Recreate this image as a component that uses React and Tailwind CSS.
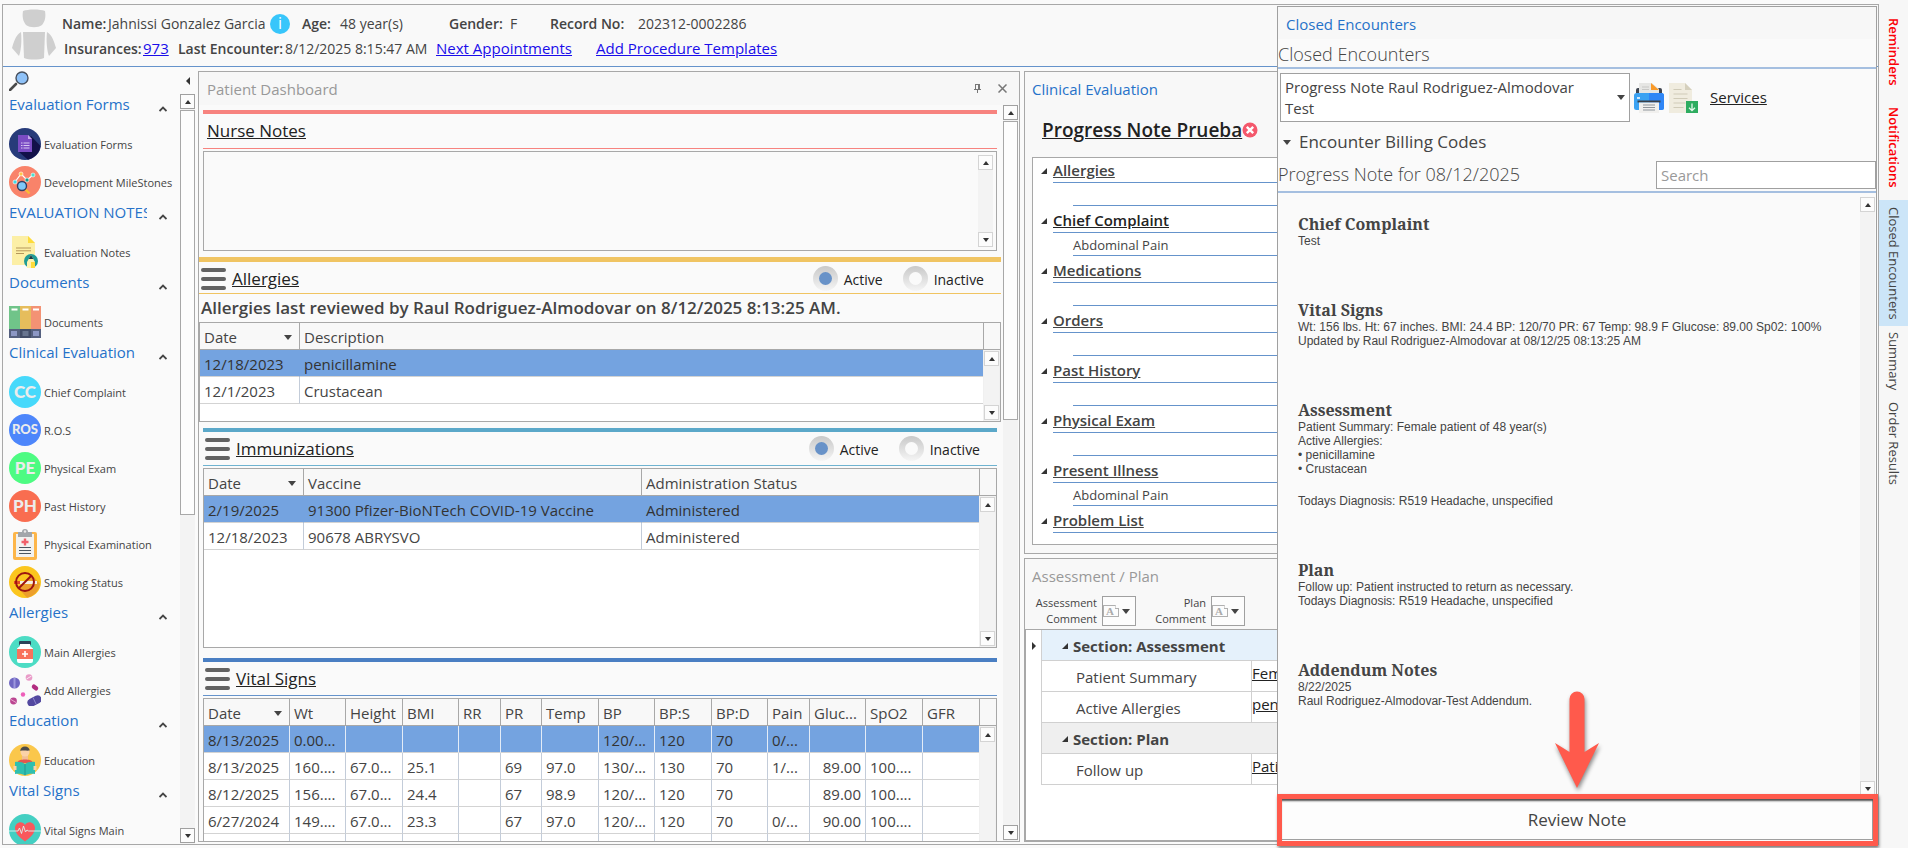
import React, { useState } from "react";

const navSections = [
  {
    title: "Evaluation Forms",
    items: [
      { label: "Evaluation Forms", icon: "form" },
      { label: "Development MileStones", icon: "milestones" },
    ],
  },
  { title: "EVALUATION NOTES", items: [{ label: "Evaluation Notes", icon: "note" }] },
  { title: "Documents", items: [{ label: "Documents", icon: "binders" }] },
  {
    title: "Clinical Evaluation",
    items: [
      { label: "Chief Complaint", badge: "CC", color: "bg-[#46d9fb]" },
      { label: "R.O.S", badge: "ROS", color: "bg-[#4d86fb]" },
      { label: "Physical Exam", badge: "PE", color: "bg-[#4dfb82]" },
      { label: "Past History", badge: "PH", color: "bg-[#f96d50]" },
      { label: "Physical Examination", icon: "clipboard" },
      { label: "Smoking Status", icon: "smoking" },
    ],
  },
  {
    title: "Allergies",
    items: [
      { label: "Main Allergies", icon: "bottle" },
      { label: "Add Allergies", icon: "pills" },
    ],
  },
  { title: "Education", items: [{ label: "Education", icon: "reader" }] },
  { title: "Vital Signs", items: [{ label: "Vital Signs Main", icon: "heart" }] },
];

const allergies = {
  columns: [{ label: "Date", width: "w-[100px]", sorted: true }, { label: "Description" }],
  rows: [
    ["12/18/2023", "penicillamine"],
    ["12/1/2023", "Crustacean"],
  ],
};

const immunizations = {
  columns: [
    { label: "Date", width: "w-[100px]", sorted: true },
    { label: "Vaccine", width: "w-[338px]" },
    { label: "Administration Status" },
  ],
  rows: [
    ["2/19/2025", "91300 Pfizer-BioNTech COVID-19 Vaccine", "Administered"],
    ["12/18/2023", "90678 ABRYSVO", "Administered"],
  ],
};

const vitals = {
  columns: [
    { label: "Date", width: "w-[86px]", sorted: true },
    { label: "Wt", width: "w-[56px]" },
    { label: "Height", width: "w-[57px]" },
    { label: "BMI", width: "w-[56px]" },
    { label: "RR", width: "w-[42px]" },
    { label: "PR", width: "w-[41px]" },
    { label: "Temp", width: "w-[57px]" },
    { label: "BP", width: "w-[56px]" },
    { label: "BP:S", width: "w-[57px]" },
    { label: "BP:D", width: "w-[56px]" },
    { label: "Pain", width: "w-[42px]" },
    { label: "Gluc...", width: "w-[56px]", right: true },
    { label: "SpO2", width: "w-[57px]" },
    { label: "GFR" },
  ],
  rows: [
    ["8/13/2025", "0.00...", "", "", "", "", "", "120/...", "120", "70", "0/...", "", "", ""],
    ["8/13/2025", "160....", "67.0...", "25.1", "", "69", "97.0", "130/...", "130", "70", "1/...", "89.00", "100....", ""],
    ["8/12/2025", "156....", "67.0...", "24.4", "", "67", "98.9", "120/...", "120", "70", "", "89.00", "100....", ""],
    ["6/27/2024", "149....", "67.0...", "23.3", "", "67", "97.0", "120/...", "120", "70", "0/...", "90.00", "100....", ""],
    ["", "", "", "", "", "", "", "", "", "", "", "", "", ""],
  ],
};

const evaluationTree = [
  { title: "Allergies", detail: "" },
  { title: "Chief Complaint", detail: "Abdominal Pain", dark: true },
  { title: "Medications", detail: "" },
  { title: "Orders", detail: "" },
  { title: "Past History", detail: "" },
  { title: "Physical Exam", detail: "" },
  { title: "Present Illness", detail: "Abdominal Pain" },
  { title: "Problem List" },
];

const noteSections = [
  { title: "Chief Complaint", lines: ["Test"] },
  {
    title: "Vital Signs",
    lines: [
      "Wt: 156 lbs. Ht: 67 inches. BMI: 24.4 BP: 120/70 PR: 67 Temp: 98.9 F Glucose: 89.00 Sp02: 100%",
      "Updated by Raul Rodriguez-Almodovar at 08/12/25 08:13:25 AM",
    ],
  },
  {
    title: "Assessment",
    lines: ["Patient Summary: Female patient of 48 year(s)", "Active Allergies:", "• penicillamine", "• Crustacean"],
    footer: "Todays Diagnosis: R519 Headache, unspecified",
  },
  {
    title: "Plan",
    lines: ["Follow up: Patient instructed to return as necessary.", "Todays Diagnosis: R519 Headache, unspecified"],
  },
  { title: "Addendum Notes", lines: ["8/22/2025", "Raul Rodriguez-Almodovar-Test Addendum."] },
];

function Caret({ className = "" }) {
  return (
    <svg className={`h-[5px] w-2 shrink-0 ${className}`} viewBox="0 0 8 5" fill="#444">
      <path d="M0 0h8L4 5z" />
    </svg>
  );
}

function TreeMark({ className = "" }) {
  return (
    <svg className={`h-[6px] w-[6px] shrink-0 ${className}`} viewBox="0 0 6 6" fill="#333">
      <path d="M6 0v6H0z" />
    </svg>
  );
}

function ScrollButton({ down, dark }) {
  return (
    <button
      type="button"
      aria-label={down ? "Scroll down" : "Scroll up"}
      className={`flex h-[15px] w-full shrink-0 items-center justify-center border bg-[#fcfcfc] ${
        dark ? "border-[#a0a0a0]" : "border-[#d4d4d4]"
      }`}
    >
      <svg className="h-1 w-[6px]" viewBox="0 0 6 4" fill="#333">
        <path d={down ? "M0 0h6L3 4z" : "M0 4h6L3 0z"} />
      </svg>
    </button>
  );
}

function ScrollBar({ thumb, dark, noDown, className = "" }) {
  return (
    <div className={`flex w-[15px] shrink-0 flex-col bg-[#f3f3f3] ${className}`}>
      <ScrollButton dark={dark} />
      {thumb && <div className={`mt-px border border-[#a8a8a8] bg-[#fdfdfd] ${thumb}`} />}
      <div className="flex-1" />
      {!noDown && <ScrollButton down dark={dark} />}
    </div>
  );
}

function NavIcon({ name }) {
  const cls = "h-8 w-8 shrink-0";
  switch (name) {
    case "form":
      return (
        <svg className={cls} viewBox="0 0 32 32">
          <circle cx="16" cy="16" r="16" fill="#273b7a" />
          <path d="M22 8l9.500 10A16 16 0 0 1 19 31.700L10 24z" fill="#121149" />
          <path d="M9 7h10l4 4v13H9z" fill="#7a4cc4" />
          <path d="M19 7l4 4h-4z" fill="#c5a9ea" />
          <path d="M12 15h1.500M12 17.500h1.500M12 20h1.500M14.500 15h6M14.500 17.500h6M14.500 20h6" stroke="#d9c8f2" strokeWidth="1" />
        </svg>
      );
    case "milestones":
      return (
        <svg className={cls} viewBox="0 0 32 32">
          <circle cx="16" cy="16" r="16" fill="#f9836a" />
          <path d="M6 16l6-8 6 6 6-5" fill="none" stroke="#fff" strokeWidth="1.200" />
          <circle cx="6" cy="16" r="2" fill="#3fd8e8" stroke="#fff" strokeWidth=".6" />
          <circle cx="12" cy="8" r="2" fill="#ffc84a" stroke="#fff" strokeWidth=".6" />
          <circle cx="18" cy="14" r="2" fill="#149c92" stroke="#fff" strokeWidth=".6" />
          <circle cx="24" cy="9" r="2" fill="#4fe0d0" stroke="#fff" strokeWidth=".6" />
          <path d="M16 23l4.500 4.500" stroke="#f9bb33" strokeWidth="2.400" />
          <circle cx="13" cy="20" r="4.500" fill="#7ec8f8" stroke="#333f63" strokeWidth="1.400" />
        </svg>
      );
    case "note":
      return (
        <svg className={cls} viewBox="0 0 32 32">
          <path d="M3 0h16l7 7v22H3z" fill="#fcefa6" />
          <path d="M19 0l7 7h-7z" fill="#fddb3c" />
          <path d="M7 12h15M7 14.800h15M7 17.500h8" stroke="#b5975a" strokeWidth="1" />
          <circle cx="22" cy="25" r="7" fill="#1f9c96" />
          <path d="M18 32v-6l4-7 4 7v6z" fill="#fff3b0" />
          <path d="M22 19l-2.300 4h4.600z" fill="#1c3d49" />
          <path d="M22 26h4v6h-4z" fill="#fddb3c" />
        </svg>
      );
    case "binders":
      return (
        <svg className={cls} viewBox="0 0 32 32">
          <path d="M0 0h11v23H0z" fill="#70c489" />
          <path d="M11 0h11v23H11z" fill="#e6bd5c" />
          <path d="M22 0h10v23H22z" fill="#f39274" />
          <path d="M0 23h32v9H0z" fill="#55607f" />
          <path d="M11 23h11v9H11z" fill="#434e68" />
          <path d="M2.500 3.500h6M13.500 3.500h6M24 3.500h6" stroke="#fff" strokeWidth="2" />
          <path d="M2 25h6v5H2zM24 25h6v5h-6z" fill="#8c97c4" />
          <path d="M13.500 25h6v5h-6z" fill="#68758f" />
        </svg>
      );
    case "clipboard":
      return (
        <svg className={cls} viewBox="0 0 32 32">
          <rect x="4" y="4" width="24" height="28" rx="2" fill="#fdb64a" />
          <path d="M7 6h18v23H7z" fill="#f2f2f0" />
          <path d="M9 9V4h4a3 3 0 0 1 6 0h4v5z" fill="#a2a6aa" />
          <circle cx="16" cy="3.500" r="1.200" fill="#e8e8e8" />
          <path d="M14.800 10.500h2.400v2.300h2.300v2.400h-2.300v2.300h-2.400v-2.300h-2.300v-2.400h2.300z" fill="#f0606a" />
          <path d="M10 19.500h12M10 22.500h12M10 25.500h12" stroke="#4c5660" strokeWidth="1" />
        </svg>
      );
    case "smoking":
      return (
        <svg className={cls} viewBox="0 0 32 32">
          <circle cx="16" cy="16" r="16" fill="#fbc61e" />
          <path d="M23 9l8 9a16 16 0 0 1-13 13.800L10 23z" fill="#ec9f2c" />
          <path d="M5 15h6v3H5z" fill="#e34a25" />
          <path d="M11 15h17v3H11z" fill="#f7efe0" />
          <circle cx="16" cy="16" r="9" fill="none" stroke="#9c1410" strokeWidth="2" />
          <path d="M22.500 9.500l-13 13" stroke="#9c1410" strokeWidth="2" />
        </svg>
      );
    case "bottle":
      return (
        <svg className={cls} viewBox="0 0 32 32">
          <circle cx="16" cy="16" r="16" fill="#4cdcc4" />
          <rect x="10" y="5" width="12" height="4" rx="1" fill="#2c4258" />
          <path d="M11 8h10v2l3 2.500V25a2 2 0 0 1-2 2H10a2 2 0 0 1-2-2V12.500L11 10z" fill="#fff" />
          <path d="M8 13h16v10H8z" fill="#f8715c" />
          <path d="M16 15v6M13 18h6" stroke="#fff" strokeWidth="1.600" />
        </svg>
      );
    case "pills":
      return (
        <svg className={cls} viewBox="0 0 32 32">
          <circle cx="5.500" cy="9" r="5.500" fill="#6f66c2" />
          <path d="M5.500 4v10" stroke="#9d97dd" strokeWidth="2" />
          <circle cx="20" cy="3.500" r="3.300" fill="#e99bc8" />
          <path d="M17.500 5l5-3" stroke="#fff" strokeWidth=".8" />
          <rect x="22.500" y="11.300" width="7" height="4.400" rx="2.200" fill="#b22d80" transform="rotate(38 26 13.500)" />
          <circle cx="14" cy="20.500" r="2.200" fill="#ee5fba" />
          <circle cx="4.500" cy="27" r="3.400" fill="#bb4591" />
          <path d="M2 25.500l5 3" stroke="#f0c0dd" strokeWidth=".8" />
          <rect x="18" y="23" width="15" height="8" rx="4" fill="#5349a0" transform="rotate(-28 25.500 27)" />
          <path d="M24 23.500l3 6.500" stroke="#8e86cf" strokeWidth="1" />
        </svg>
      );
    case "reader":
      return (
        <svg className={cls} viewBox="0 0 32 32">
          <circle cx="16" cy="16" r="16" fill="#fac74b" />
          <path d="M13 11h6v7h-6z" fill="#f2bf94" />
          <circle cx="16" cy="8" r="4.500" fill="#fbd2a8" />
          <path d="M11.300 7c0-3 2-4.600 4.700-4.600s4.700 1.600 4.700 4.200c-3 .5-6.400-.6-9.400.4z" fill="#4b4b4b" />
          <path d="M8 19c1-3 4-3.500 8-3.500s7 .5 8 3.500z" fill="#e4564f" />
          <path d="M6 18c4-.5 8 .5 10 2 2-1.500 6-2.500 10-2v12c-4-.5-8 0-10 1.500C14 30 10 29.500 6 30z" fill="#2fbfb0" />
          <path d="M16 20v11" stroke="#25978f" strokeWidth="1" />
          <path d="M4.500 22h3v4h-3zM24.500 22h3v4h-3z" fill="#fbd2a8" />
        </svg>
      );
    default:
      return (
        <svg className={cls} viewBox="0 0 32 32">
          <circle cx="16" cy="16" r="16" fill="#44cfc2" />
          <path d="M16 27.500C10 23 6 19 6 14c0-6 7.500-8 10-3 2.500-5 10-3 10 3 0 5-4 9-10 13.500z" fill="#f9585d" />
          <path d="M0 17h9l1.500-3 2 5.500L14.500 12l2 6 1.500-2 1.500 1H32" fill="none" stroke="#d9f5f2" strokeWidth=".9" />
        </svg>
      );
  }
}

function Sidebar() {
  return (
    <aside className="flex w-[195px] shrink-0 pr-[3px]">
      <nav className="min-w-0 flex-1 overflow-hidden pl-[6px]">
        <button type="button" aria-label="Search" className="flex h-[26px] items-start pt-1">
          <svg className="h-5 w-5" viewBox="0 0 20 20">
            <path d="M1 19l6-6" stroke="#4a4a4a" strokeWidth="2.600" strokeLinecap="round" />
            <circle cx="13" cy="7" r="6" fill="#8fc2f8" stroke="#47505e" strokeWidth="1.400" />
          </svg>
        </button>
        {navSections.map((section) => (
          <div key={section.title}>
            <div className="flex h-8 items-start">
              <h3 className="w-[138px] overflow-hidden text-[15px] leading-[22px] whitespace-nowrap text-[#2672c9]">
                {section.title}
              </h3>
              <button type="button" aria-label={`Collapse ${section.title}`} className="mt-[13px] ml-3">
                <svg className="h-[6px] w-2" viewBox="0 0 8 6" fill="none" stroke="#444" strokeWidth="1.800">
                  <path d="M.5 5L4 1.500 7.500 5" />
                </svg>
              </button>
            </div>
            {section.items.map((item) => (
              <a key={item.label} href="#" className="flex h-[38px] items-center gap-[3px]">
                {item.icon ? (
                  <NavIcon name={item.icon} />
                ) : (
                  <span
                    className={`flex h-8 w-8 shrink-0 items-center justify-center rounded-full font-[Lato,sans-serif] font-black text-[#ececec] ${
                      item.badge.length > 2 ? "text-[13px]" : "text-[17px]"
                    } ${item.color}`}
                  >
                    {item.badge}
                  </span>
                )}
                <span className="pt-[2px] text-[11px] whitespace-nowrap">{item.label}</span>
              </a>
            ))}
          </div>
        ))}
      </nav>
      <div className="flex w-[15px] shrink-0 flex-col">
        <button type="button" aria-label="Hide menu" className="flex h-[27px] items-center justify-center">
          <svg className="h-2 w-1" viewBox="0 0 4 8" fill="#333">
            <path d="M4 0v8L0 4z" />
          </svg>
        </button>
        <ScrollBar dark thumb="h-[405px]" className="flex-1 pb-px" />
      </div>
    </aside>
  );
}

function PatientHeader() {
  return (
    <header className="flex h-[62px] shrink-0 border-b border-[#6593cb] bg-[#f9f9f9] pl-[9px] text-[14px]">
      <svg className="mt-1 h-[52px] w-11 shrink-0" viewBox="0 0 44 52" fill="#cfcfcf">
        <path d="M11 2c5-2 17-2 22 0 1 6 0 10-3 14-4 3-12 3-16 0-3-4-4-8-3-14z" />
        <path d="M11 23h22l-1 26c-5 2-15 2-20 0z" />
        <path d="M9 23c-5 3-7 9-9 16l7 8c2-5 3-15 2-24zM35 23c5 3 7 9 9 16l-7 8c-2-5-3-15-2-24z" />
      </svg>
      <div className="flex flex-col pt-[6px] pl-[6px] leading-[25px] whitespace-nowrap">
        <div className="flex items-center">
          <b className="w-[46px] font-semibold">Name:</b>
          <span className="w-[162px]">Jahnissi Gonzalez Garcia</span>
          <button
            type="button"
            aria-label="Patient information"
            className="flex h-5 w-5 items-center justify-center rounded-full bg-[#38c6fb] text-[16px] text-white"
          >
            i
          </button>
          <b className="ml-3 w-[38px] font-semibold">Age:</b>
          <span className="w-[109px]">48 year(s)</span>
          <b className="w-[61px] font-semibold">Gender:</b>
          <span className="w-[40px]">F</span>
          <b className="w-[88px] font-semibold">Record No:</b>
          <span>202312-0002286</span>
        </div>
        <div className="flex items-center pl-[2px]">
          <b className="w-[79px] font-semibold">Insurances:</b>
          <a href="#" className="w-[35px] text-[15px] text-[#1a0dea] underline">
            973
          </a>
          <b className="w-[107px] font-semibold">Last Encounter:</b>
          <span className="w-[151px]">8/12/2025 8:15:47 AM</span>
          <a href="#" className="w-[160px] text-[15px] text-[#1a0dea] underline">
            Next Appointments
          </a>
          <a href="#" className="text-[15px] text-[#1a0dea] underline">
            Add Procedure Templates
          </a>
        </div>
      </div>
    </header>
  );
}

function DataGrid({ columns, rows, gridLine, noDown }) {
  return (
    <>
      <div className="min-w-0 flex-1 overflow-hidden bg-white">
        <table className="w-full table-fixed border-separate border-spacing-0 text-[15px]">
          <thead>
            <tr>
              {columns.map((col, i) => (
                <th
                  key={col.label}
                  className={`h-[27px] border-b border-[#a8a8a8] bg-[#f8f8f8] p-0 px-1 text-left font-normal whitespace-nowrap ${
                    col.width || ""
                  } ${i < columns.length - 1 ? "border-r" : ""}`}
                >
                  <span className="flex items-center justify-between pt-[2px]">
                    {col.label}
                    {col.sorted && <Caret className="mr-[3px]" />}
                  </span>
                </th>
              ))}
            </tr>
          </thead>
          <tbody>
            {rows.map((row, r) => (
              <tr key={r} className={r === 0 ? "bg-[#74a3e0] text-[#333]" : ""}>
                {row.map((cell, i) => (
                  <td
                    key={i}
                    className={`h-[27px] border-b border-b-[#d3d3d3] p-0 px-1 pt-[2px] whitespace-nowrap ${
                      columns[i].right ? "text-right" : ""
                    } ${i < row.length - 1 ? "border-r" : ""} ${
                      r > 0 ? "border-r-[#c3ccd9]" : gridLine ? "border-r-[#e3ecf7]" : "border-r-[#74a3e0]"
                    }`}
                  >
                    {cell}
                  </td>
                ))}
              </tr>
            ))}
          </tbody>
        </table>
      </div>
      <div className="flex w-[17px] shrink-0 flex-col bg-[#f0f0f0]">
        <div className="h-[27px] shrink-0 border-b border-l border-[#a8a8a8] bg-[#f8f8f8]" />
        <ScrollBar noDown={noDown} className="mx-px flex-1 pt-px pb-px" />
      </div>
    </>
  );
}

function BarsButton({ label }) {
  return (
    <button type="button" aria-label={label} className="flex w-[25px] shrink-0 flex-col gap-[5px]">
      <span className="h-1 rounded-sm bg-[#636363]" />
      <span className="h-1 rounded-sm bg-[#636363]" />
      <span className="h-1 rounded-sm bg-[#636363]" />
    </button>
  );
}

function StatusRadios({ name }) {
  const [status, setStatus] = useState("Active");
  return (
    <div className="flex gap-5 pr-[17px]">
      {["Active", "Inactive"].map((option) => (
        <label key={option} className="flex items-center gap-[6px] text-[14px] text-[#222]">
          <input
            type="radio"
            name={name}
            checked={status === option}
            onChange={() => setStatus(option)}
            className="flex h-[25px] w-[25px] appearance-none items-center justify-center rounded-full bg-linear-to-b from-[#c9c9c9] to-[#f5f5f5] before:h-[13px] before:w-[13px] before:rounded-full before:bg-[#fafafa] checked:before:bg-[#6892c8]"
          />
          <span className="pt-[2px]">{option}</span>
        </label>
      ))}
    </div>
  );
}

function PatientDashboard() {
  return (
    <section className="flex min-w-0 flex-col overflow-hidden border border-[#a8a8a8]">
      <div className="flex h-[33px] shrink-0 items-center bg-[#f7f7f7] pr-3 pl-2">
        <h2 className="flex-1 pt-[2px] text-[15px] text-[#999]">Patient Dashboard</h2>
        <button type="button" aria-label="Pin panel" className="mr-4">
          <svg className="h-[9px] w-[9px]" viewBox="0 0 9 9">
            <path d="M2 0h5v5h1v1H5v3H4V6H1V5h1z" fill="#777" />
            <path d="M3 1h2v4H3z" fill="#f7f7f7" />
          </svg>
        </button>
        <button type="button" aria-label="Close panel">
          <svg className="h-[9px] w-[9px]" viewBox="0 0 9 9" fill="none" stroke="#777" strokeWidth="1.500">
            <path d="M.5.500l8 8M8.500.500l-8 8" />
          </svg>
        </button>
      </div>
      <div className="flex min-h-0 flex-1">
        <div className="flex min-w-0 flex-1 flex-col pt-[5px]">
          {/* Nurse notes */}
          <div className="mr-1 ml-1 flex shrink-0 flex-col">
            <div className="h-1 bg-[#f7837f]" />
            <div className="mb-[2px] flex h-[35px] items-center border-b border-[#f7837f] pl-1">
              <a href="#" className="text-[17px] text-[#222] underline">
                Nurse Notes
              </a>
            </div>
            <div className="flex h-[100px] border border-[#a8a8a8] p-[3px]">
              <textarea aria-label="Nurse Notes" className="flex-1 resize-none outline-none" />
              <ScrollBar />
            </div>
          </div>

          {/* Allergies */}
          <div className="mt-[6px] flex shrink-0 flex-col">
            <div className="h-[5px] bg-[#f0c462]" />
            <div className="flex h-8 items-center border-b border-[#f0c462] pt-[2px] pl-[2px]">
              <BarsButton label="Allergies menu" />
              <a href="#" className="ml-[6px] flex-1 text-[17px] text-[#222] underline">
                Allergies
              </a>
              <StatusRadios name="allergyStatus" />
            </div>
            <p className="pl-[2px] text-[17px] leading-7 font-semibold whitespace-nowrap">
              Allergies last reviewed by Raul Rodriguez-Almodovar on 8/12/2025 8:13:25 AM.
            </p>
            <div className="flex h-[100px] border border-[#a8a8a8]">
              <DataGrid {...allergies} />
            </div>
          </div>

          {/* Immunizations */}
          <div className="mx-1 mt-[6px] flex shrink-0 flex-col">
            <div className="h-1 bg-[#5ba8c9]" />
            <div className="mb-[2px] flex h-[34px] items-center border-b border-[#6fb3d0] pl-[2px]">
              <BarsButton label="Immunizations menu" />
              <a href="#" className="ml-[6px] flex-1 text-[17px] text-[#222] underline">
                Immunizations
              </a>
              <StatusRadios name="immunizationStatus" />
            </div>
            <div className="flex h-[180px] border border-[#a8a8a8]">
              <DataGrid {...immunizations} />
            </div>
          </div>

          {/* Vital signs */}
          <div className="mx-1 mt-[10px] flex min-h-0 flex-1 flex-col">
            <div className="h-1 shrink-0 bg-[#4a7fc3]" />
            <div className="mb-[2px] flex h-[34px] shrink-0 items-center border-b border-[#6593cb] pl-[2px]">
              <BarsButton label="Vital Signs menu" />
              <a href="#" className="ml-[6px] text-[17px] text-[#222] underline">
                Vital Signs
              </a>
            </div>
            <div className="flex min-h-0 flex-1 overflow-hidden border border-b-0 border-[#a8a8a8]">
              <DataGrid {...vitals} gridLine noDown />
            </div>
          </div>
        </div>
        <ScrollBar dark thumb="h-[299px]" className="mr-px ml-[2px] pb-px" />
      </div>
    </section>
  );
}

function ClinicalEvaluation() {
  return (
    <section className="h-[483px] shrink-0 border border-r-0 border-[#a8a8a8] bg-[#f8f8f8] pl-[7px]">
      <h2 className="h-[35px] pt-px text-[15px] leading-8 text-[#2672c9]">Clinical Evaluation</h2>
      <div className="flex h-[50px] items-center pb-1 pl-[10px]">
        <a href="#" className="text-[19px] font-semibold whitespace-nowrap text-[#222] underline">
          Progress Note Prueba
        </a>
        <button type="button" aria-label="Close note">
          <svg className="h-4 w-4" viewBox="0 0 16 16">
            <circle cx="8" cy="8" r="7.500" fill="#f4586c" />
            <path d="M4.800 4.800l6.400 6.400M11.200 4.800l-6.400 6.400" stroke="#fff" strokeWidth="2.400" />
          </svg>
        </button>
      </div>
      <ul className="h-[388px] border border-r-0 border-[#a8a8a8] bg-white pl-2">
        {evaluationTree.map((node) => (
          <li key={node.title} className="h-[50px]">
            <div className="flex h-[25px] items-center gap-[6px]">
              <TreeMark />
              <a
                href="#"
                className={`h-[25px] flex-1 border-b border-[#6593cb] text-[15px] leading-[25px] font-semibold underline ${
                  node.dark ? "text-[#222]" : ""
                }`}
              >
                {node.title}
              </a>
            </div>
            {node.detail !== undefined && (
              <p className="ml-8 h-[23px] border-b border-[#6593cb] text-[13px] leading-6">{node.detail}</p>
            )}
          </li>
        ))}
      </ul>
    </section>
  );
}

function CommentButton({ label }) {
  return (
    <button type="button" className="flex items-center gap-[5px] text-right text-[11px] leading-4">
      <span className="w-[68px]">{label}</span>
      <span className="flex h-[30px] w-[34px] items-center justify-between border border-[#a0a0a0] bg-[#fcfcfc] pr-[5px]">
        <span className="relative flex h-3 w-4 items-center border border-[#b0b0b0] pl-[2px] font-['Liberation_Serif',serif] text-[11px] font-bold text-[#aaa]">
          A
          <svg className="absolute -top-px -right-px h-1 w-1" viewBox="0 0 4 4">
            <path d="M0 0h4v4z" fill="#fcfcfc" />
            <path d="M0 0v3.500h4" fill="none" stroke="#b0b0b0" />
          </svg>
        </span>
        <Caret />
      </span>
    </button>
  );
}

function SectionRow({ title, active }) {
  return (
    <tr className={active ? "bg-[#e5f1fb]" : "bg-[#efefef]"}>
      <th
        colSpan={2}
        className="h-[31px] border-b border-l border-[#d0d0d0] p-0 pt-[2px] pl-5 text-left text-[15px] font-bold whitespace-nowrap"
      >
        <span className="flex items-center gap-[5px]">
          <TreeMark />
          {title}
        </span>
      </th>
    </tr>
  );
}

function PlanRow({ label, value }) {
  return (
    <tr>
      <td className="h-[31px] border-r border-b border-l border-[#d0d0d0] p-0 pt-[2px] pl-[34px]">{label}</td>
      <td className="overflow-hidden border-b border-[#d0d0d0] p-0 align-top leading-6 whitespace-nowrap">
        <a href="#" className="text-[#222] underline">
          {value}
        </a>
      </td>
    </tr>
  );
}

function AssessmentPlan() {
  return (
    <section className="flex min-h-0 flex-1 flex-col border border-r-0 border-b-2 border-[#a8a8a8] bg-[#f8f8f8]">
      <h2 className="h-[36px] shrink-0 pt-px pl-[7px] text-[15px] leading-8 text-[#999]">Assessment / Plan</h2>
      <div className="flex h-[35px] shrink-0 items-start gap-[2px] border-b border-[#a8a8a8] pl-1">
        <CommentButton label="Assessment Comment" />
        <CommentButton label="Plan Comment" />
      </div>
      <div className="flex flex-1 bg-white">
        <div className="w-4 shrink-0 border-l border-[#a8a8a8] pt-3 pl-[6px]">
          <svg className="h-2 w-1" viewBox="0 0 4 8" fill="#333">
            <path d="M0 0v8l4-4z" />
          </svg>
        </div>
        <div className="min-w-0 flex-1">
          <table className="w-full table-fixed border-separate border-spacing-0 text-[15px]">
            <colgroup>
              <col className="w-[211px]" />
              <col />
            </colgroup>
            <tbody>
              <SectionRow title="Section: Assessment" active />
              <PlanRow label="Patient Summary" value="Fem" />
              <PlanRow label="Active Allergies" value="pen" />
              <SectionRow title="Section: Plan" />
              <PlanRow label="Follow up" value="Pati" />
            </tbody>
          </table>
        </div>
      </div>
    </section>
  );
}

function ClosedEncounters() {
  const [note, setNote] = useState("Progress Note Raul Rodriguez-Almodovar Test");
  return (
    <section className="absolute top-px right-px bottom-0 flex w-[600px] flex-col border border-[#a0a0a0] bg-[#fafafa]">
      <h2 className="h-[32px] shrink-0 bg-[#f7f7f7] pt-px pl-2 text-[15px] leading-8 text-[#2672c9]">
        Closed Encounters
      </h2>
      <h3 className="h-[30px] shrink-0 border-b-2 border-[#a5bfe0] text-[18px] leading-[30px] font-light">
        Closed Encounters
      </h3>
      <div className="mt-1 ml-[2px] flex h-[49px] shrink-0 items-center">
        <div className="relative flex h-[49px] w-[350px] items-center border border-[#a0a0a0] bg-white pr-1 pl-1">
          <span className="flex-1 pr-4 text-[15px] leading-[21px]">{note}</span>
          <Caret />
          <select
            aria-label="Progress note"
            value={note}
            onChange={(e) => setNote(e.target.value)}
            className="absolute inset-0 w-full cursor-pointer opacity-0"
          >
            <option>Progress Note Raul Rodriguez-Almodovar Test</option>
          </select>
        </div>
        <button type="button" aria-label="Print" className="ml-1">
          <svg className="h-[30px] w-[30px]" viewBox="0 0 30 30">
            <path d="M2 10V7q0-2 2-2h22q2 0 2 2v3z" fill="#3f4550" />
            <path d="M5 0h13l7 6v8H5z" fill="#e6e6e4" />
            <path d="M17 0l8 7h-8z" fill="#f99a28" />
            <path d="M8 4h7M8 6.500h7" stroke="#c8c8c6" />
            <rect y="10" width="30" height="17" rx="2.500" fill="#3ba2f2" />
            <path d="M15 10h12.500A2.500 2.500 0 0 1 30 12.500v12a2.500 2.500 0 0 1-2.500 2.500H15z" fill="#2f86f6" />
            <path d="M3.500 18.500h23" stroke="#3b4048" strokeWidth="2" />
            <path d="M5 19.500h20V30H5z" fill="#f1f0ee" />
            <path d="M9 22h12M9 24.500h12M9 27h12" stroke="#90959c" />
            <path d="M3 15h3" stroke="#fff" strokeWidth="1.500" />
          </svg>
        </button>
        <button type="button" aria-label="Export note" className="ml-[5px]">
          <svg className="h-[30px] w-[30px]" viewBox="0 0 30 30">
            <path d="M0 0h16l7 7v23H0z" fill="#f0ecdf" />
            <path d="M16 0l7 7h-7z" fill="#d5d0bd" />
            <path d="M4.500 6.500h8M4.500 11h14M4.500 15.500h14M4.500 20h12M4.500 24.500h10" stroke="#d0cbb8" />
            <path d="M17 18h12v12H17z" fill="#2eac60" />
            <path d="M23 20.500v7M20 24.700l3 3 3-3" fill="none" stroke="#e6f7ec" strokeWidth="1.300" />
          </svg>
        </button>
        <a href="#" className="ml-[11px] text-[15px] text-[#222] underline">
          Services
        </a>
      </div>
      <button type="button" className="mt-1 flex h-[32px] shrink-0 items-center gap-2 pl-[5px] text-left">
        <Caret />
        <span className="text-[17px]">Encounter Billing Codes</span>
      </button>
      <div className="flex h-[35px] shrink-0 items-center border-b-2 border-[#a5bfe0]">
        <h3 className="flex-1 text-[18px] font-light">Progress Note for 08/12/2025</h3>
        <input
          type="text"
          aria-label="Search"
          placeholder="Search"
          className="h-[28px] w-[220px] border border-[#a0a0a0] bg-white px-1 text-[15px] outline-none placeholder:text-[#999]"
        />
      </div>
      <div className="flex min-h-0 flex-1">
        <article className="min-w-0 flex-1 overflow-hidden pt-[21px] pl-5">
          {noteSections.map((section) => (
            <div key={section.title} className="mb-[52px]">
              <h4 className="font-['Noto_Serif','DejaVu_Serif_Condensed','DejaVu_Serif',serif] text-[16px] leading-5 font-bold">
                {section.title}
              </h4>
              <div className="font-['Liberation_Sans',Arial,sans-serif] text-[12px] leading-[14px]">
                {section.lines.map((line) => (
                  <p key={line}>{line}</p>
                ))}
                {section.footer && <p className="mt-[18px]">{section.footer}</p>}
              </div>
            </div>
          ))}
        </article>
        <ScrollBar className="mt-[4px] mr-px" />
      </div>
      <div className="relative flex h-[47px] shrink-0 p-[3px]">
        <button type="button" className="flex-1 border border-[#a0a0a0] bg-[#fdfdfd] pt-px text-[17px]">
          Review Note
        </button>
        {/* highlight frame and pointer over the button */}
        <div className="pointer-events-none absolute -top-[2px] -right-[2px] -bottom-[3px] -left-px border-[5px] border-[#ff5a4c] shadow-[inset_0_3px_2px_-1px_#555,1px_2px_3px_#777]" />
        <svg
          className="pointer-events-none absolute bottom-[54px] left-1/2 h-[98px] w-11 -translate-x-1/2 drop-shadow-[1px_3px_2px_#888]"
          viewBox="0 0 44 98"
          fill="#ff5a4c"
        >
          <path d="M14.500 8a7.500 7.500 0 0 1 15 0v53L44 52 22 97 0 52l14.500 9z" />
        </svg>
      </div>
    </section>
  );
}

const sideTabs = [
  { label: "Reminders", style: "h-[84px] font-semibold text-[#fb0007]" },
  { label: "Notifications", style: "h-[106px] font-semibold text-[#fb0007]" },
  { label: "Closed Encounters", style: "h-[126px] bg-[#cce5f8]" },
  { label: "Summary", style: "h-[70px]" },
  { label: "Order Results", style: "h-[94px]" },
];

export default function App() {
  return (
    <div className="flex h-screen overflow-hidden bg-[#fafafa] font-['Open_Sans','Noto_Sans',sans-serif] text-[#444]">
      <main className="relative mt-1 mb-[3px] ml-[2px] flex min-w-0 flex-1 flex-col border border-[#a8a8a8]">
        <PatientHeader />
        <div className="mr-[601px] flex min-h-0 flex-1">
          <Sidebar />
          <div className="grid min-w-0 flex-1 grid-cols-[822fr_253fr] grid-rows-[minmax(0,1fr)] gap-x-1 pt-1 pb-[2px]">
            <PatientDashboard />
            <div className="flex min-h-0 min-w-0 flex-col gap-1">
              <ClinicalEvaluation />
              <AssessmentPlan />
            </div>
          </div>
        </div>
        <ClosedEncounters />
      </main>
      <div className="flex w-[29px] shrink-0 flex-col bg-[#f7f7f7] pt-[10px]">
        {sideTabs.map((tab) => (
          <button
            key={tab.label}
            type="button"
            className={`flex items-center justify-center text-[13px] whitespace-nowrap [writing-mode:vertical-rl] ${tab.style}`}
          >
            {tab.label}
          </button>
        ))}
      </div>
    </div>
  );
}
